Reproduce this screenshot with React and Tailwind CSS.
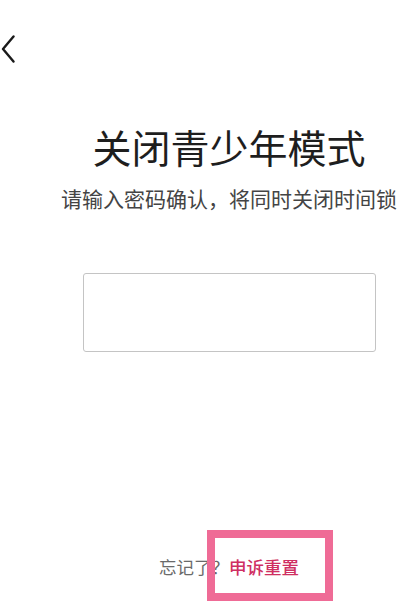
export default function App() {
  const cjk = { fontFamily: '"Noto Sans CJK SC", "Noto Sans", sans-serif' };
  return (
    <div className="relative w-[400px] h-[615px] bg-white overflow-hidden" style={cjk}>
      <div className="pt-[35px] pl-[1px]">
        <svg width="14" height="28" viewBox="0 0 14 28" fill="none">
          <polyline points="12.5,1.5 2,14 12.5,26.5" stroke="#1a1a1a" strokeWidth="2.4" strokeLinecap="round" strokeLinejoin="round" />
        </svg>
      </div>
      <div className="pl-[58px] flex flex-col items-center">
        <h1 className="mt-[61px] text-[39px] leading-[44px] text-[#1e1e1e] whitespace-nowrap">关闭青少年模式</h1>
        <p className="mt-[17px] text-[21px] leading-[26px] text-[#444444] whitespace-nowrap">请输入密码确认，将同时关闭时间锁</p>
        <div className="mt-[62px] w-[293px] h-[79px] border-[1.5px] border-[#c4c4c4] rounded-[3px] bg-white"></div>
        <div className="mt-[204px] text-[17.5px] leading-[22px] whitespace-nowrap">
          <span className="text-[#6a6a6a]">忘记了？</span>
          <span className="text-[#cf2f62] font-medium">申诉重置</span>
        </div>
      </div>
      <div className="absolute left-[207px] top-[530px] w-[126px] h-[71px] border-[8px] border-[#ef6b96]"></div>
    </div>
  );
}
